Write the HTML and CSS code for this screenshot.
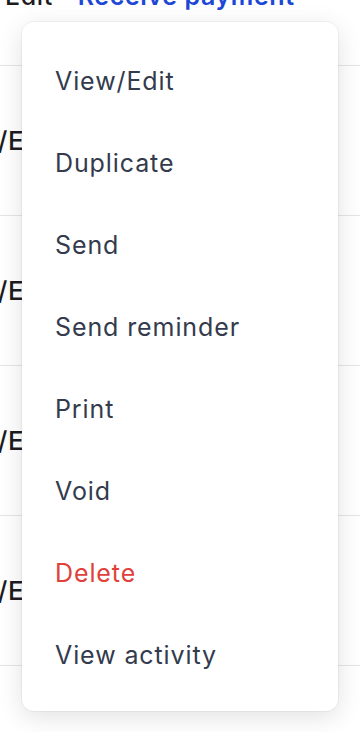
FILE: index.html
```html
<!DOCTYPE html>
<html lang="en">
<head>
    <meta charset="UTF-8">
    <meta name="viewport" content="width=device-width, initial-scale=1.0">
    <title>Invoices</title>
    <link rel="stylesheet" href="styles.css">
</head>
<body>
<main class="list">
    <div class="row row-first">
        <span class="action">Edit</span>
        <span class="link">Receive payment</span>
    </div>
    <div class="row"><span class="action clipped">View/Edit</span></div>
    <div class="row"><span class="action clipped">View/Edit</span></div>
    <div class="row"><span class="action clipped">View/Edit</span></div>
    <div class="row"><span class="action clipped">View/Edit</span></div>
</main>

<div class="menu">
    <div class="menu-item">View/Edit</div>
    <div class="menu-item">Duplicate</div>
    <div class="menu-item">Send</div>
    <div class="menu-item">Send reminder</div>
    <div class="menu-item">Print</div>
    <div class="menu-item">Void</div>
    <div class="menu-item danger">Delete</div>
    <div class="menu-item">View activity</div>
</div>
</body>
</html>
```

FILE: styles.css
```css
body {
    font-family: Inter, "Noto Sans", sans-serif;
    margin: 0;
    background: #fff;
    overflow: hidden;
    height: 732px;
}
.list {
    display: flex;
    flex-direction: column;
    margin-top: -84px;
}
.row {
    height: 150px;
    border-bottom: 1px solid #e3e5e8;
    display: flex;
    align-items: center;
    box-sizing: border-box;
    font-size: 26px;
    line-height: 30px;
    font-weight: 500;
    letter-spacing: 0.6px;
    color: #1c1c1e;
}
.row-first {
    align-items: flex-end;
    padding-bottom: 54px;
    font-size: 25px;
}
.row-first .action {
    margin-left: 5px;
}
.link {
    color: #1d47d6;
    font-weight: 600;
    margin-left: 25px;
}
.clipped {
    margin-left: -66px;
}
.menu {
    position: absolute;
    top: 22px;
    left: 22px;
    width: 316px;
    height: 689px;
    box-sizing: border-box;
    padding: 18px 0 15px;
    background: #fff;
    border-radius: 12px;
    box-shadow: 0 0 0 1px rgba(0, 0, 0, 0.04), 0 6px 26px rgba(0, 0, 0, 0.12);
}
.menu-item {
    height: 82px;
    display: flex;
    align-items: center;
    padding-left: 33px;
    font-size: 25px;
    letter-spacing: 0.9px;
    color: #333b4d;
}
.danger {
    color: #e0413a;
}
```
